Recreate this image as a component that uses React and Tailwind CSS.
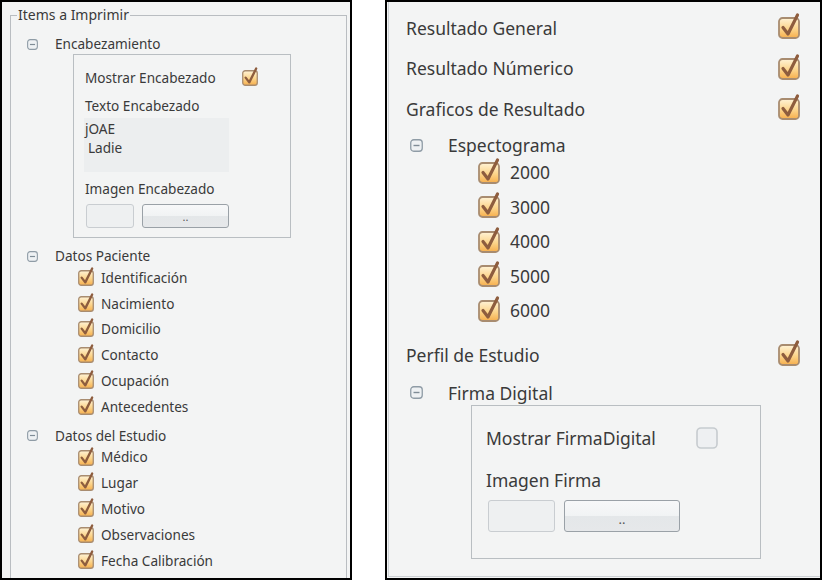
import React from 'react';

const font = { fontFamily: '"Noto Sans", "Open Sans", sans-serif' };

const Check = ({ size = 16, checked = true }) => (
  <svg width={size} height={size} viewBox="0 0 22 22" overflow="visible" className="shrink-0">
    <defs>
      <linearGradient id="cbFill" x1="0" y1="0" x2="0" y2="1">
        <stop offset="0" stopColor="#fff3d6" />
        <stop offset="0.55" stopColor="#fcd48a" />
        <stop offset="1" stopColor="#f6ae4c" />
      </linearGradient>
    </defs>
    {checked ? (
      <>
        <rect x="1" y="1" width="20" height="20" rx="3.5" fill="url(#cbFill)" stroke="#a88c70" strokeWidth="1.8" />
        <path d="M5 10.5 L10 17 L19.5 -2" fill="none" stroke="#8e5d3e" strokeWidth="3.2" strokeLinecap="round" strokeLinejoin="round" />
      </>
    ) : (
      <rect x="1" y="1" width="20" height="20" rx="4" fill="#eef0f2" stroke="#c6cbcf" strokeWidth="1.6" />
    )}
  </svg>
);

const Collapse = ({ size = 11 }) => (
  <svg width={size} height={size} viewBox="0 0 13 13" className="shrink-0">
    <rect x="0.75" y="0.75" width="11.5" height="11.5" rx="3" fill="#eef1f3" stroke="#8f9ca6" strokeWidth="1.3" />
    <line x1="3.5" y1="6.5" x2="9.5" y2="6.5" stroke="#7f8c96" strokeWidth="1.4" />
  </svg>
);

const Field = ({ className }) => (
  <div className={`rounded-[3px] border border-[#c9cdd1] bg-[#eef0f1] ${className}`} />
);

const Browse = ({ className, text }) => (
  <div
    className={`flex items-end justify-center rounded-[3px] border border-[#9aa1a7] bg-[linear-gradient(#f7f8f9_0%,#f1f3f4_50%,#e4e7e9_51%,#e6e8ea_100%)] text-[#555] ${className} ${text}`}
  >
    <span className="leading-none pb-[5px]">..</span>
  </div>
);

const LeftItem = ({ label }) => (
  <div className="h-[25.8px] flex items-center pl-[67px]">
    <Check size={16} />
    <span className="ml-[7px]">{label}</span>
  </div>
);

const LeftHeader = ({ label, className = '' }) => (
  <div className={`flex items-center pl-[16px] ${className}`}>
    <Collapse size={11} />
    <span className="ml-[17px]">{label}</span>
  </div>
);

const RightRow = ({ label, className = '' }) => (
  <div className={`flex items-center justify-between pl-[17px] pr-[20px] ${className}`}>
    <span>{label}</span>
    <Check size={22} />
  </div>
);

const RightHeader = ({ label, className = '' }) => (
  <div className={`flex items-center pl-[21px] ${className}`}>
    <Collapse size={13} />
    <span className="ml-[25px]">{label}</span>
  </div>
);

const FreqItem = ({ label }) => (
  <div className="h-[34.5px] flex items-center pl-[89px]">
    <Check size={22} />
    <span className="ml-[10px]">{label}</span>
  </div>
);

export default function App() {
  const paciente = ['Identificación', 'Nacimiento', 'Domicilio', 'Contacto', 'Ocupación', 'Antecedentes'];
  const estudio = ['Médico', 'Lugar', 'Motivo', 'Observaciones', 'Fecha Calibración'];
  const freqs = ['2000', '3000', '4000', '5000', '6000'];

  return (
    <div className="w-[822px] h-[580px] bg-white flex gap-[33px] text-[#3a3a3a]" style={font}>
      {/* left panel */}
      <div className="w-[352px] h-[580px] border-2 border-black bg-[#f3f4f4] shrink-0 overflow-hidden text-[13.6px]">
        <fieldset className="ml-[8px] mt-[3px] w-[337px] h-[580px] border border-b-0 border-[#b9bdc1]">
          <legend className="ml-[6px] px-[1px] leading-[20px] text-[14px]">Items a Imprimir</legend>

          <LeftHeader label="Encabezamiento" className="mt-[9px] h-[20px]" />

          <div className="ml-[62px] w-[218px] h-[184px] border border-[#b9bec2] pl-[11px]">
            <div className="mt-[13px] h-[20px] flex items-center">
              <span className="w-[157px]">Mostrar Encabezado</span>
              <Check size={16} />
            </div>
            <div className="mt-[8px] h-[20px] flex items-center">Texto Encabezado</div>
            <div className="mt-[2px] -ml-[1px] w-[145px] h-[54px] bg-[#eceeef] pt-[1px] pl-[1px] leading-[19px]">
              <div>jOAE</div>
              <div className="pl-[3px]">Ladie</div>
            </div>
            <div className="mt-[7px] h-[20px] flex items-center">Imagen Encabezado</div>
            <div className="mt-[5px] ml-[1px] flex gap-[8px]">
              <Field className="w-[48px] h-[24px]" />
              <Browse className="w-[87px] h-[24px]" text="text-[11px]" />
            </div>
          </div>

          <LeftHeader label="Datos Paciente" className="mt-[9px] h-[18px]" />
          {paciente.map((p) => (
            <LeftItem key={p} label={p} />
          ))}

          <LeftHeader label="Datos del Estudio" className="mt-[7px] h-[18px]" />
          {estudio.map((p) => (
            <LeftItem key={p} label={p} />
          ))}
        </fieldset>
      </div>

      {/* right panel */}
      <div className="w-[437px] h-[580px] border-2 border-black bg-[#f3f4f4] shrink-0 overflow-hidden text-[17.5px]">
        <div className="ml-[1px] h-[575px] border-l border-b border-[#cdd1d4]">
          <div className="h-[5.75px]" />
          <RightRow label="Resultado General" className="h-[40.5px]" />
          <RightRow label="Resultado Númerico" className="h-[40.5px]" />
          <RightRow label="Graficos de Resultado" className="h-[40.5px]" />

          <RightHeader label="Espectograma" className="mt-[6px] h-[20px]" />
          {freqs.map((f) => (
            <FreqItem key={f} label={f} />
          ))}

          <RightRow label="Perfil de Estudio" className="mt-[7px] h-[40px]" />

          <RightHeader label="Firma Digital" className="mt-[8px] h-[20px]" />

          <div className="mt-[2px] ml-[82px] w-[290px] h-[154px] border border-[#b9bec2] pl-[14px]">
            <div className="mt-[20px] h-[24px] flex items-center">
              <span className="w-[210px]">Mostrar FirmaDigital</span>
              <Check size={22} checked={false} />
            </div>
            <div className="mt-[18px] h-[24px] flex items-center">Imagen Firma</div>
            <div className="mt-[8px] ml-[2px] flex gap-[9px]">
              <Field className="w-[67px] h-[32px]" />
              <Browse className="w-[116px] h-[32px]" text="text-[13px]" />
            </div>
          </div>
        </div>
      </div>
    </div>
  );
}
